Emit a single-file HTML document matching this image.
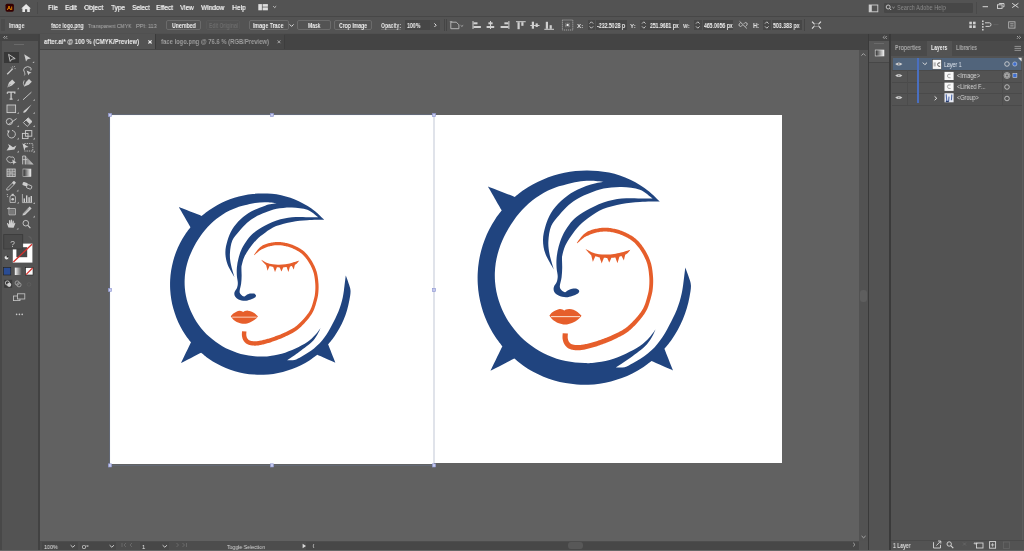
<!DOCTYPE html>
<html><head><meta charset="utf-8">
<style>
*{margin:0;padding:0;box-sizing:border-box}
html,body{width:1024px;height:551px;overflow:hidden;background:#535353;font-family:"Liberation Sans",sans-serif}
.a{position:absolute}
.t{position:absolute;white-space:pre;transform-origin:0 0;font-family:"Liberation Sans",sans-serif;will-change:transform;-webkit-font-smoothing:antialiased}
svg{overflow:visible}
</style></head><body>
<div style="position:absolute;left:0;top:0;width:1024px;height:551px;filter:blur(0.3px)">
<div class="a" style="left:0px;top:0px;width:1024px;height:16px;background:#535353;"></div>
<div class="a" style="left:0px;top:16px;width:1024px;height:1px;background:#474747;"></div>
<div class="a" style="left:0px;top:17px;width:1024px;height:16px;background:#535353;"></div>
<div class="a" style="left:0px;top:33px;width:1024px;height:1px;background:#505050;"></div>
<div class="a" style="left:40px;top:34px;width:819px;height:16px;background:#444444;"></div>
<div class="a" style="left:40px;top:34px;width:115px;height:15px;background:#535353;"></div>
<div class="a" style="left:156px;top:34px;width:127.5px;height:15px;background:#474747;"></div>
<div class="a" style="left:155px;top:34px;width:1px;height:15px;background:#3a3a3a;"></div>
<div class="a" style="left:283.5px;top:35px;width:0.8px;height:14px;background:#3e3e3e;"></div>
<div class="a" style="left:0px;top:34px;width:38px;height:7px;background:#444444;"></div>
<div class="a" style="left:0px;top:41px;width:38px;height:510px;background:#535353;"></div>
<div class="a" style="left:0px;top:41px;width:1.5px;height:510px;background:#484848;"></div>
<div class="a" style="left:38px;top:34px;width:2px;height:517px;background:#424242;"></div>
<div class="a" style="left:40px;top:50px;width:819px;height:491px;background:#616161;"></div>
<div class="a" style="left:859px;top:34px;width:9px;height:16px;background:#444444;"></div>
<div class="a" style="left:859px;top:50px;width:9px;height:491px;background:#525252;"></div>
<div class="a" style="left:860px;top:289.5px;width:7px;height:12.4px;background:#5e5e5e;border-radius:3px"></div>
<svg class="a" style="left:859px;top:50px" width="9" height="9"><path d="M2.4,5.6 L4.4,3.6 L6.4,5.6" stroke="#bcbcbc" stroke-width="0.8" fill="none"/></svg>
<div class="a" style="left:868px;top:34px;width:1px;height:517px;background:#3a3a3a;"></div>
<div class="a" style="left:869px;top:34px;width:20px;height:517px;background:#535353;"></div>
<div class="a" style="left:869px;top:34px;width:20px;height:7px;background:#444444;"></div>
<div class="a" style="left:889px;top:34px;width:2px;height:517px;background:#3a3a3a;"></div>
<div class="a" style="left:891px;top:34px;width:133px;height:517px;background:#535353;"></div>
<div class="a" style="left:891px;top:34px;width:133px;height:7px;background:#444444;"></div>
<div class="a" style="left:40px;top:541px;width:819px;height:9px;background:#4d4d4d;"></div>
<div class="a" style="left:0px;top:550px;width:1024px;height:1px;background:#676767;"></div>
<div class="a" style="left:110px;top:115px;width:324px;height:349px;background:#ffffff;"></div>
<div class="a" style="left:434px;top:115px;width:348px;height:348px;background:#ffffff;"></div>
<svg class="a" style="left:0;top:0" width="40" height="16">
<rect x="5.5" y="3.7" width="8.4" height="8" rx="1.6" fill="#330000"/>
<text x="9.7" y="10.3" font-family="Liberation Sans" font-weight="700" font-size="5.6" fill="#ff9a00" text-anchor="middle">Ai</text>
<path d="M21.3,8.4 L26.1,3.9 L30.9,8.4 L29.8,8.4 L29.8,11.9 L27.2,11.9 L27.2,9.2 L25,9.2 L25,11.9 L22.4,11.9 L22.4,8.4Z" fill="#e6e6e6"/>
<rect x="37" y="2" width="1" height="12" fill="#4a4a4a"/>
</svg>
<svg class="a" style="left:250px;top:0" width="40" height="16">
<rect x="8.3" y="4.1" width="3.6" height="6.2" fill="#dedede"/><rect x="12.6" y="4.1" width="5.3" height="2.6" fill="#dedede"/><rect x="12.6" y="7.4" width="5.3" height="2.9" fill="#dedede"/>
<path d="M23.2,6.2 L24.7,7.6 L26.2,6.2" stroke="#d0d0d0" stroke-width="0.9" fill="none"/>
</svg>
<div class="a" style="left:884px;top:3px;width:89px;height:10px;background:#474747;border-radius:1px"></div>
<svg class="a" style="left:860px;top:0" width="164" height="16">
<rect x="9.2" y="5" width="8.6" height="6.8" fill="none" stroke="#cfcfcf" stroke-width="0.9"/><rect x="9.2" y="5" width="2.6" height="6.8" fill="#cfcfcf"/>
<circle cx="28.2" cy="7" r="2" fill="none" stroke="#cfcfcf" stroke-width="0.9"/><path d="M29.6,8.4 L31.2,10" stroke="#cfcfcf" stroke-width="1"/>
<path d="M32.4,7 L33.5,8 L34.6,7" stroke="#cfcfcf" stroke-width="0.7" fill="none"/>
<rect x="116" y="2" width="1" height="12" fill="#4a4a4a"/>
<rect x="122.6" y="6.2" width="5.4" height="1" fill="#d8d8d8"/>
<rect x="137.5" y="4.8" width="4.6" height="3.6" fill="none" stroke="#d8d8d8" stroke-width="0.9"/><path d="M139.3,4.2 L139.3,3.5 L144,3.5 L144,6.8 L143,6.8" stroke="#d8d8d8" stroke-width="0.9" fill="none"/>
<path d="M152.2,3.3 L158.4,7.6 M158.4,3.3 L152.2,7.6" stroke="#d8d8d8" stroke-width="1"/>
</svg>
<svg class="a" style="left:0;top:17px" width="6" height="16"><rect x="1.5" y="2" width="1" height="12" fill="#474747"/><rect x="3.5" y="2" width="1" height="12" fill="#474747"/></svg>
<div class="a" style="left:51px;top:29.2px;width:32px;height:0.6px;background:#808080;"></div>
<div class="a" style="left:166px;top:20px;width:35px;height:10px;background:#535353;border:1px solid #6b6b6b;border-radius:2px"></div>
<div class="a" style="left:205.5px;top:20px;width:34px;height:10px;background:#535353;border:1px solid #585858;border-radius:2px"></div>
<div class="a" style="left:249px;top:20px;width:40px;height:10px;background:#535353;border:1px solid #6b6b6b;border-radius:2px"></div>
<svg class="a" style="left:288px;top:17px" width="8" height="16"><path d="M1.6,7.4 L3.6,9.4 L5.6,7.4" stroke="#dcdcdc" stroke-width="1" fill="none"/></svg>
<div class="a" style="left:297px;top:20px;width:34px;height:10px;background:#535353;border:1px solid #6b6b6b;border-radius:2px"></div>
<div class="a" style="left:334px;top:20px;width:38px;height:10px;background:#535353;border:1px solid #6b6b6b;border-radius:2px"></div>
<svg class="a" style="left:381px;top:29px" width="21" height="2"><line x1="0.5" y1="0.5" x2="20" y2="0.5" stroke="#9a9a9a" stroke-width="0.7" stroke-dasharray="1,1"/></svg>
<div class="a" style="left:405px;top:20px;width:25px;height:10px;background:#464646;"></div>
<div class="a" style="left:430px;top:20px;width:10px;height:10px;background:#4b4b4b;"></div>
<svg class="a" style="left:430px;top:17px" width="10" height="16"><path d="M4.4,6.4 L6.2,8.2 L4.4,10" stroke="#e0e0e0" stroke-width="1" fill="none"/></svg>
<div class="a" style="left:444px;top:19px;width:1px;height:12px;background:#454545;"></div>
<div class="a" style="left:446px;top:19px;width:1px;height:12px;background:#454545;"></div>
<svg class="a" style="left:440px;top:17px" width="125" height="16">
<path d="M10.8,5.2 L16.3,5.2 L18.9,7.8 L18.9,11.7 L10.8,11.7Z" fill="none" stroke="#bdbdbd" stroke-width="0.9"/><path d="M9.8,4.7 L12.3,4.7" stroke="#bdbdbd" stroke-width="0.8"/>
<path d="M20.6,8.3 L21.9,9.4 L23.2,8.3" stroke="#bdbdbd" stroke-width="0.8" fill="none"/>
<rect x="32.5" y="4" width="1" height="8" fill="#d0d0d0"/><rect x="33.5" y="5.3" width="4" height="2" fill="#d0d0d0"/><rect x="33.5" y="9" width="7.4" height="2" fill="#d0d0d0"/>
<rect x="50" y="4" width="1" height="8" fill="#d0d0d0"/><rect x="48.4" y="5.3" width="4.2" height="2" fill="#d0d0d0"/><rect x="46.6" y="9" width="7.6" height="2" fill="#d0d0d0"/>
<rect x="68.4" y="4" width="1" height="8" fill="#d0d0d0"/><rect x="64.4" y="5.3" width="4" height="2" fill="#d0d0d0"/><rect x="60.6" y="9" width="7.8" height="2" fill="#d0d0d0"/>
<rect x="76" y="4.2" width="9.7" height="1" fill="#d0d0d0"/><rect x="77.5" y="5.2" width="2.2" height="7" fill="#d0d0d0"/><rect x="81.3" y="5.2" width="2.2" height="3.6" fill="#d0d0d0"/>
<rect x="90.3" y="8" width="9.2" height="1" fill="#d0d0d0"/><rect x="91.8" y="4.7" width="2.2" height="7" fill="#d0d0d0"/><rect x="95.6" y="6.4" width="2.2" height="3.6" fill="#d0d0d0"/>
<rect x="104.3" y="11.8" width="9.7" height="1" fill="#d0d0d0"/><rect x="105.8" y="4.8" width="2.2" height="7" fill="#d0d0d0"/><rect x="109.6" y="8.2" width="2.2" height="3.6" fill="#d0d0d0"/>
</svg>
<svg class="a" style="left:560px;top:17px" width="80" height="16">
<rect x="2.4" y="3" width="10.4" height="10" fill="none" stroke="#b5b5b5" stroke-width="0.8" stroke-dasharray="1.2,0.8"/>
<rect x="5.6" y="6.2" width="4" height="3.6" fill="none" stroke="#b5b5b5" stroke-width="0.6" stroke-dasharray="0.8,0.6"/>
<rect x="6.6" y="7" width="2" height="2" fill="#f0f0f0"/>
</svg>
<div class="a" style="left:588px;top:20px;width:7px;height:10px;background:#474747;"></div>
<svg class="a" style="left:588px;top:17px" width="8" height="16"><path d="M1.6,6.6 L3.4,4.8 L5.2,6.6 M1.6,9.4 L3.4,11.2 L5.2,9.4" stroke="#d0d0d0" stroke-width="0.9" fill="none"/></svg>
<div class="a" style="left:595.7px;top:20.4px;width:31.2px;height:9.2px;background:#464646;"></div>
<div class="a" style="left:640px;top:20px;width:8px;height:10px;background:#474747;"></div>
<svg class="a" style="left:640px;top:17px" width="8" height="16"><path d="M2,6.6 L3.8,4.8 L5.6,6.6 M2,9.4 L3.8,11.2 L5.6,9.4" stroke="#d0d0d0" stroke-width="0.9" fill="none"/></svg>
<div class="a" style="left:648.4px;top:20.4px;width:30.4px;height:9.2px;background:#464646;"></div>
<div class="a" style="left:694px;top:20px;width:8px;height:10px;background:#474747;"></div>
<svg class="a" style="left:694px;top:17px" width="8" height="16"><path d="M2,6.6 L3.8,4.8 L5.6,6.6 M2,9.4 L3.8,11.2 L5.6,9.4" stroke="#d0d0d0" stroke-width="0.9" fill="none"/></svg>
<div class="a" style="left:703px;top:20.4px;width:30px;height:9.2px;background:#464646;"></div>
<svg class="a" style="left:736px;top:17px" width="14" height="16"><path d="M4.6,5.6 L3.4,6.8 Q2.4,8 3.4,9 Q4.4,10 5.6,9 L6.4,8.2 M7.8,6.8 L8.6,6 Q9.8,5 10.8,6 Q11.8,7 10.8,8.2 L9.6,9.4 M3.6,4.4 L10.8,11.4" stroke="#c8c8c8" stroke-width="0.9" fill="none"/></svg>
<div class="a" style="left:763px;top:20px;width:8px;height:10px;background:#474747;"></div>
<svg class="a" style="left:763px;top:17px" width="8" height="16"><path d="M2,6.6 L3.8,4.8 L5.6,6.6 M2,9.4 L3.8,11.2 L5.6,9.4" stroke="#d0d0d0" stroke-width="0.9" fill="none"/></svg>
<div class="a" style="left:771.5px;top:20.4px;width:30.3px;height:9.2px;background:#464646;"></div>
<div class="a" style="left:804px;top:19px;width:1px;height:12px;background:#454545;"></div>
<svg class="a" style="left:808px;top:17px" width="16" height="16"><path d="M4,4.6 L6.4,7 M13,4.6 L10.6,7 M4,11.6 L6.4,9.2 M13,11.6 L10.6,9.2" stroke="#e0e0e0" stroke-width="1.1"/><rect x="6.4" y="6.8" width="4.2" height="2.6" fill="none" stroke="#9a9a9a" stroke-width="0.6"/></svg>
<svg class="a" style="left:960px;top:17px" width="64" height="16">
<rect x="9.3" y="4.7" width="2.6" height="2.6" fill="#cfcfcf"/><rect x="13" y="4.7" width="2.6" height="2.6" fill="#cfcfcf"/><rect x="9.3" y="8.4" width="2.6" height="2.6" fill="#cfcfcf"/><rect x="13" y="8.4" width="2.6" height="2.6" fill="#cfcfcf"/>
<rect x="22" y="3.5" width="1.6" height="1.6" fill="#cfcfcf"/><rect x="22" y="6.3" width="1.6" height="1.6" fill="#cfcfcf"/><rect x="22" y="9.1" width="1.6" height="1.6" fill="#cfcfcf"/><rect x="22" y="11.9" width="1.6" height="1.6" fill="#cfcfcf"/>
<path d="M25,5.8 L29.4,5.8 Q31,5.8 31,7.6 Q31,9.4 29.4,9.4 L25.5,9.4" stroke="#cfcfcf" stroke-width="1" fill="none"/>
<rect x="33.5" y="7.3" width="5" height="0.8" fill="#666"/>
<rect x="48.7" y="4.8" width="6.3" height="6.3" fill="none" stroke="#bdbdbd" stroke-width="0.8"/><path d="M50.2,6.8 L53.6,6.8 M50.2,8.9 L53.6,8.9" stroke="#bdbdbd" stroke-width="0.8"/>
</svg>
<svg class="a" style="left:0;top:34px" width="12" height="7"><path d="M5,2 L3.6,3.4 L5,4.8 M7.2,2 L5.8,3.4 L7.2,4.8" stroke="#bcbcbc" stroke-width="0.8" fill="none"/></svg>
<svg class="a" style="left:145px;top:36px" width="10" height="12"><path d="M3.4,4.3 L6.6,7.5 M6.6,4.3 L3.4,7.5" stroke="#e8e8e8" stroke-width="1.1"/></svg>
<svg class="a" style="left:274px;top:36px" width="10" height="12"><path d="M3.6,4.4 L6.4,7.2 M6.4,4.4 L3.6,7.2" stroke="#a8a8a8" stroke-width="1"/></svg>
<svg class="a" style="left:869px;top:34px" width="155" height="7"><path d="M15.5,2 L14.1,3.4 L15.5,4.8 M17.7,2 L16.3,3.4 L17.7,4.8" stroke="#bcbcbc" stroke-width="0.8" fill="none"/><path d="M148,2 L149.4,3.4 L148,4.8 M150.2,2 L151.6,3.4 L150.2,4.8" stroke="#bcbcbc" stroke-width="0.8" fill="none"/></svg>
<div class="a" style="left:869px;top:41px;width:20px;height:22px;background:#585858;border-bottom:1px solid #474747"></div>
<svg class="a" style="left:869px;top:41px" width="20" height="22"><rect x="5" y="2" width="10" height="1" fill="#6a6a6a"/>
<defs><linearGradient id="gg" x1="0" x2="1"><stop offset="0" stop-color="#2a2a2a"/><stop offset="1" stop-color="#f2f2f2"/></linearGradient></defs>
<rect x="6.2" y="9" width="8.8" height="6" fill="url(#gg)" stroke="#e8e8e8" stroke-width="0.6"/></svg>
<div class="a" style="left:891px;top:41px;width:133px;height:15px;background:#4a4a4a;"></div>
<div class="a" style="left:927px;top:41px;width:24.5px;height:15px;background:#535353;"></div>
<svg class="a" style="left:1012px;top:41px" width="12" height="15"><path d="M2.5,5.4 L9,5.4 M2.5,7.4 L9,7.4 M2.5,9.4 L9,9.4" stroke="#9a9a9a" stroke-width="0.9"/></svg>
<div class="a" style="left:891px;top:56px;width:133px;height:484px;background:#535353;"></div>
<div class="a" style="left:1021.5px;top:56px;width:0.8px;height:484px;background:#5c5c5c;"></div>
<div class="a" style="left:893px;top:57.5px;width:128px;height:12.5px;background:#51647b;"></div>
<div class="a" style="left:892px;top:70px;width:130px;height:1px;background:#4a4a4a;"></div>
<div class="a" style="left:892px;top:81.5px;width:130px;height:1px;background:#4a4a4a;"></div>
<div class="a" style="left:892px;top:93px;width:130px;height:1px;background:#4a4a4a;"></div>
<div class="a" style="left:892px;top:104.5px;width:130px;height:1px;background:#4a4a4a;"></div>
<div class="a" style="left:907px;top:70px;width:1px;height:34.5px;background:#4c4c4c;"></div>
<div class="a" style="left:1002px;top:70px;width:1px;height:34.5px;background:#4c4c4c;"></div>
<div class="a" style="left:916.6px;top:58px;width:2px;height:45px;background:#4a6fc0;"></div>
<svg class="a" style="left:0;top:0" width="1024" height="120">
<path d="M895.1999999999999,64 Q898.8,60.8 902.4,64 Q898.8,67.2 895.1999999999999,64Z" fill="#d0d0d0"/><circle cx="898.8" cy="64" r="0.9" fill="#8a8a8a"/><path d="M895.1999999999999,75.5 Q898.8,72.3 902.4,75.5 Q898.8,78.7 895.1999999999999,75.5Z" fill="#d0d0d0"/><circle cx="898.8" cy="75.5" r="0.9" fill="#8a8a8a"/><path d="M895.1999999999999,97.5 Q898.8,94.3 902.4,97.5 Q898.8,100.7 895.1999999999999,97.5Z" fill="#d0d0d0"/><circle cx="898.8" cy="97.5" r="0.9" fill="#8a8a8a"/>
<path d="M922.8,62.6 L924.9,64.7 L927,62.6" stroke="#e0e0e0" stroke-width="1" fill="none"/>
<rect x="932.3" y="59.6" width="9.1" height="9.6" fill="#f6f6f6" stroke="#3a3a3a" stroke-width="0.5"/><rect x="933.6" y="62.4" width="2.2" height="4" fill="#b8b8b8"/><path d="M940.2,62.8 Q937.4,62.4 937.6,64.6 Q937.8,66.8 940.2,66.4" stroke="#444" stroke-width="0.9" fill="none"/>
<rect x="944.5" y="71.9" width="9.1" height="8.1" fill="#f8f8f8"/><path d="M950.6,74.2 Q947.2,73.6 947.4,76 Q947.6,78.4 950.6,77.8" stroke="#8a8a8a" stroke-width="0.8" fill="none"/>
<rect x="944.5" y="82.6" width="9.1" height="8.3" fill="#f8f8f8"/><path d="M950.6,84.9 Q947.2,84.3 947.4,86.7 Q947.6,89.1 950.6,88.5" stroke="#8a8a8a" stroke-width="0.8" fill="none"/>
<path d="M934.6,96.4 L936.8,98.3 L934.6,100.2" stroke="#e0e0e0" stroke-width="1" fill="none"/>
<rect x="944.5" y="93.2" width="9.1" height="9.1" fill="#e8eaf2"/><path d="M946.2,94.4 L946.8,101 M949,96.6 L948.6,101.4 M951.8,94.6 L951.4,100.2" stroke="#4f6aa8" stroke-width="1.1" fill="none"/><rect x="945.8" y="100.8" width="3" height="1.4" fill="#263a6a"/>
<circle cx="1007" cy="64" r="2.3" fill="none" stroke="#dcdcdc" stroke-width="0.8"/>
<circle cx="1014.8" cy="64" r="2.1" fill="#3f6fd0" stroke="#e8e8e8" stroke-width="0.5"/>
<path d="M1018,57.8 L1021.6,57.8 L1021.6,61.4Z" fill="#e0e0e0"/>
<circle cx="1007" cy="75.5" r="3" fill="#6a6a6a" stroke="#bdbdbd" stroke-width="0.7"/><circle cx="1007" cy="75.5" r="1.7" fill="none" stroke="#e0e0e0" stroke-width="0.7"/>
<rect x="1012.9" y="73.5" width="4" height="4" fill="#3f6fd0" stroke="#e8e8e8" stroke-width="0.5"/>
<circle cx="1007" cy="87" r="2.3" fill="none" stroke="#d0d0d0" stroke-width="0.8"/>
<circle cx="1007" cy="98.5" r="2.3" fill="none" stroke="#d0d0d0" stroke-width="0.8"/>
</svg>
<div class="a" style="left:891px;top:540px;width:133px;height:10px;background:#535353;border-top:1px solid #4a4a4a"></div>
<svg class="a" style="left:920px;top:538px" width="104" height="12">
<path d="M13.5,4.2 L13.5,10 L20.5,10 L20.5,6.8 M16.4,7.6 L20.6,3.2 M18,3 L20.8,3 L20.8,5.6" stroke="#d6d6d6" stroke-width="0.9" fill="none"/>
<circle cx="29.2" cy="6" r="2.2" fill="none" stroke="#d6d6d6" stroke-width="0.9"/><path d="M30.8,7.6 L33.3,10.2" stroke="#d6d6d6" stroke-width="1.1"/>
<path d="M43,4.5 L46,7.5 M46,4.5 L43,7.5" stroke="#6a6a6a" stroke-width="0.8"/>
<rect x="56.5" y="5" width="6.5" height="5" fill="none" stroke="#d6d6d6" stroke-width="0.9"/><path d="M54.3,5.4 L57.5,5.4 M55.2,4.2 L54.2,5.4 L55.2,6.6" stroke="#d6d6d6" stroke-width="0.8" fill="none"/>
<rect x="69.6" y="3.6" width="6" height="6.6" fill="none" stroke="#d6d6d6" stroke-width="0.9"/><path d="M72.6,5.2 L72.6,8.6 M70.9,6.9 L74.3,6.9" stroke="#d6d6d6" stroke-width="0.8"/>
<rect x="83.4" y="4" width="6" height="6.4" fill="none" stroke="#666" stroke-width="0.8"/>
</svg>
<div class="a" style="left:42px;top:541.8px;width:36px;height:8px;background:#474747;"></div>
<svg class="a" style="left:68px;top:540px" width="12" height="10"><path d="M2.6,5.2 L4.8,7.2 L7,5.2" stroke="#d8d8d8" stroke-width="0.9" fill="none"/></svg>
<div class="a" style="left:80px;top:541.8px;width:36px;height:8px;background:#474747;"></div>
<svg class="a" style="left:107px;top:540px" width="12" height="10"><path d="M2.6,5.2 L4.8,7.2 L7,5.2" stroke="#d8d8d8" stroke-width="0.9" fill="none"/></svg>
<svg class="a" style="left:118px;top:540px" width="22" height="10"><path d="M4,3 L4,7 M8,3 L6,5 L8,7 M14,3 L12,5 L14,7" stroke="#707070" stroke-width="0.8" fill="none"/></svg>
<div class="a" style="left:140px;top:541.8px;width:29px;height:8px;background:#474747;"></div>
<svg class="a" style="left:160px;top:540px" width="12" height="10"><path d="M2.6,5.2 L4.8,7.2 L7,5.2" stroke="#d8d8d8" stroke-width="0.9" fill="none"/></svg>
<svg class="a" style="left:172px;top:540px" width="20" height="10"><path d="M4.5,3 L6.5,5 L4.5,7 M10.5,3 L12.5,5 L10.5,7 M14.5,3 L14.5,7" stroke="#707070" stroke-width="0.8" fill="none"/></svg>
<div class="a" style="left:306px;top:541.5px;width:553px;height:8.5px;background:#474747;"></div>
<svg class="a" style="left:300px;top:541px" width="20" height="10"><path d="M2.6,2.8 L6,5 L2.6,7.2Z" fill="#dcdcdc"/><path d="M13.8,3 Q12.6,5 13.8,7" stroke="#bcbcbc" stroke-width="0.8" fill="none"/></svg>
<div class="a" style="left:568px;top:542px;width:15px;height:7px;background:#585858;border-radius:3px"></div>
<svg class="a" style="left:850px;top:536px" width="18" height="14"><path d="M3.2,6.8 L5,8.6 L3.2,10.4" stroke="#bcbcbc" stroke-width="0.8" fill="none"/><path d="M11.6,0 L13.6,1.8 L15.6,0" stroke="#bcbcbc" stroke-width="0.8" fill="none"/></svg>
<div class="a" style="left:14px;top:43.5px;width:10px;height:1px;background:#6a6a6a;"></div>
<div class="a" style="left:4px;top:51.8px;width:14.5px;height:11.4px;background:#383838;"></div>
<svg class="a" style="left:0;top:0" width="1024" height="551" viewBox="0 0 1024 551">
<g id="logo">
<path d="M659.80,201.60 C658.07,199.97 652.67,194.54 649.41,191.82 C646.14,189.11 643.40,187.29 640.23,185.30 C637.05,183.30 633.74,181.46 630.35,179.85 C626.96,178.23 623.45,176.80 619.89,175.59 C616.33,174.39 612.68,173.39 609.01,172.61 C605.34,171.83 601.60,171.26 597.88,170.89 C594.15,170.52 590.39,170.36 586.65,170.38 C582.92,170.40 579.17,170.62 575.47,171.02 C571.77,171.41 568.07,172.00 564.43,172.75 C560.79,173.50 557.18,174.44 553.63,175.55 C550.09,176.65 546.59,177.93 543.18,179.39 C539.77,180.84 536.41,182.46 533.16,184.25 C529.92,186.04 526.75,188.00 523.70,190.11 C520.66,192.22 516.36,195.77 514.89,196.91 C510.40,195.16 492.42,188.19 487.93,186.45 C490.23,190.43 499.45,206.37 501.75,210.35 C500.64,211.88 497.12,216.34 495.05,219.50 C492.98,222.65 491.07,225.94 489.35,229.30 C487.63,232.66 486.08,236.12 484.72,239.65 C483.37,243.17 482.19,246.78 481.22,250.43 C480.25,254.07 479.46,257.79 478.88,261.52 C478.30,265.25 477.91,269.03 477.73,272.80 C477.54,276.57 477.56,280.37 477.78,284.13 C477.99,287.90 478.41,291.68 479.03,295.40 C479.64,299.12 480.46,302.84 481.47,306.47 C482.47,310.11 483.68,313.71 485.06,317.22 C486.45,320.73 488.03,324.19 489.78,327.53 C491.53,330.87 493.47,334.14 495.56,337.28 C497.66,340.42 501.22,344.85 502.35,346.36 C500.39,350.44 492.54,366.77 490.57,370.85 C494.53,368.81 510.37,360.64 514.33,358.60 C515.84,359.78 520.25,363.47 523.38,365.65 C526.51,367.83 529.78,369.85 533.12,371.69 C536.47,373.52 539.94,375.18 543.46,376.64 C546.99,378.11 550.61,379.39 554.27,380.46 C557.93,381.54 561.68,382.42 565.43,383.10 C569.19,383.78 573.00,384.26 576.81,384.53 C580.61,384.80 584.46,384.87 588.27,384.73 C592.08,384.59 595.91,384.25 599.69,383.70 C603.47,383.15 607.24,382.40 610.93,381.45 C614.63,380.50 618.30,379.35 621.87,378.01 C625.44,376.67 628.96,375.13 632.37,373.42 C635.78,371.70 639.12,369.80 642.33,367.73 C645.53,365.66 650.06,362.12 651.61,361.00 C655.18,362.56 669.43,368.82 672.99,370.39 C671.56,366.78 665.82,352.37 664.39,348.77 C665.59,347.25 669.38,342.80 671.62,339.64 C673.85,336.47 675.93,333.17 677.81,329.78 C679.69,326.39 681.39,322.87 682.89,319.30 C684.39,315.73 685.70,312.05 686.80,308.33 C687.90,304.62 688.81,300.82 689.50,297.00 C690.19,293.19 691.09,288.87 690.94,285.45 C690.79,282.03 689.54,279.49 688.60,276.50 C687.66,273.51 685.85,269.00 685.30,267.50 C684.94,270.38 683.75,280.49 683.16,284.80 C682.56,289.11 682.33,290.52 681.73,293.35 C681.13,296.17 680.40,298.97 679.56,301.73 C678.72,304.49 677.75,307.22 676.67,309.90 C675.59,312.57 674.33,315.18 673.08,317.78 C671.82,320.38 670.48,322.94 669.12,325.52 C667.76,328.09 666.44,330.72 664.93,333.23 C663.41,335.75 661.78,338.22 660.03,340.62 C658.28,343.01 656.49,345.45 654.45,347.60 C652.40,349.76 650.09,351.69 647.77,353.55 C645.44,355.41 642.98,357.12 640.48,358.75 C637.98,360.37 635.40,361.89 632.77,363.29 C630.14,364.69 627.49,366.45 624.69,367.14 C621.88,367.84 617.40,367.40 615.94,367.45 C618.04,366.04 623.78,362.41 628.55,358.95 C633.31,355.49 640.66,350.27 644.51,346.68 C648.36,343.10 649.82,340.31 651.64,337.44 C653.47,334.57 654.83,330.80 655.46,329.47 C654.45,330.81 651.96,334.70 649.37,337.47 C646.78,340.24 643.82,343.39 639.91,346.09 C635.99,348.80 630.92,351.39 625.87,353.69 C620.82,355.99 614.90,358.38 609.60,359.89 C604.30,361.39 598.23,362.17 594.06,362.70 C589.89,363.24 587.75,363.12 584.60,363.10 C581.45,363.08 578.28,362.93 575.15,362.60 C572.02,362.28 568.89,361.78 565.80,361.12 C562.72,360.47 559.66,359.65 556.66,358.68 C553.67,357.70 550.71,356.57 547.83,355.28 C544.95,354.00 542.13,352.56 539.40,350.99 C536.67,349.41 534.01,347.69 531.46,345.83 C528.92,343.98 526.45,341.99 524.11,339.88 C521.77,337.77 519.53,335.53 517.42,333.19 C515.31,330.85 513.32,328.38 511.47,325.83 C509.62,323.28 507.90,320.62 506.33,317.89 C504.76,315.16 503.32,312.33 502.06,309.45 C500.79,306.57 499.67,303.60 498.72,300.60 C497.77,297.60 496.98,294.54 496.37,291.45 C495.77,288.37 495.33,285.24 495.07,282.11 C494.82,278.98 494.75,275.83 494.85,272.70 C494.95,269.57 495.25,266.44 495.70,263.36 C496.16,260.27 496.80,257.21 497.58,254.20 C498.37,251.20 499.33,248.24 500.40,245.34 C501.48,242.45 502.71,239.61 504.04,236.83 C505.37,234.06 506.82,231.34 508.38,228.69 C509.93,226.05 511.60,223.46 513.37,220.95 C515.14,218.43 517.01,215.98 518.99,213.62 C520.97,211.27 523.06,208.98 525.27,206.81 C527.48,204.64 529.80,202.55 532.23,200.61 C534.65,198.67 537.20,196.84 539.84,195.18 C542.48,193.51 545.23,191.98 548.05,190.62 C550.87,189.26 553.80,188.05 556.76,187.02 C559.73,185.99 562.30,185.32 565.84,184.43 C569.38,183.55 573.97,182.32 578.00,181.70 C582.03,181.08 585.73,180.68 590.00,180.70 C594.27,180.72 601.33,181.62 603.60,181.80 C601.33,182.30 594.93,183.18 590.00,184.80 C585.07,186.42 578.83,188.80 574.00,191.50 C569.17,194.20 564.83,197.42 561.00,201.00 C557.17,204.58 553.58,208.83 551.00,213.00 C548.42,217.17 546.83,221.50 545.50,226.00 C544.17,230.50 543.00,235.33 543.00,240.00 C543.00,244.67 543.70,249.10 545.50,254.00 C547.30,258.90 552.42,266.83 553.80,269.40 C553.08,266.83 550.40,258.73 549.50,254.00 C548.60,249.27 548.12,245.67 548.40,241.00 C548.68,236.33 549.38,230.33 551.20,226.00 C553.02,221.67 556.38,218.50 559.30,215.00 C562.22,211.50 565.58,207.77 568.70,205.00 C571.82,202.23 574.45,200.40 578.00,198.40 C581.55,196.40 585.73,194.63 590.00,193.00 C594.27,191.37 598.32,189.60 603.60,188.60 C608.88,187.60 615.65,186.80 621.70,187.00 C627.75,187.20 634.75,187.87 639.90,189.80 C645.05,191.73 650.48,197.13 652.60,198.60 C651.23,198.60 648.78,198.65 644.40,198.60 C640.02,198.55 632.35,197.90 626.30,198.30 C620.25,198.70 614.15,199.32 608.10,201.00 C602.05,202.68 595.18,205.80 590.00,208.40 C584.82,211.00 580.50,213.83 577.00,216.60 C573.50,219.37 571.43,221.78 569.00,225.00 C566.57,228.22 564.13,232.27 562.40,235.90 C560.67,239.53 559.57,243.12 558.60,246.80 C557.63,250.48 556.93,254.47 556.60,258.00 C556.27,261.53 556.42,265.00 556.60,268.00 C556.78,271.00 557.67,273.70 557.70,276.00 C557.73,278.30 557.45,279.93 556.80,281.80 C556.15,283.67 554.22,285.50 553.80,287.20 C553.38,288.90 553.50,290.60 554.30,292.00 C555.10,293.40 556.67,294.72 558.60,295.60 C560.53,296.48 563.63,297.23 565.90,297.30 C568.17,297.37 570.27,296.58 572.20,296.00 C574.13,295.42 576.33,294.63 577.50,293.80 C578.67,292.97 579.32,291.83 579.20,291.00 C579.08,290.17 577.97,289.17 576.80,288.80 C575.63,288.43 573.72,288.50 572.20,288.80 C570.68,289.10 568.90,290.03 567.70,290.60 C566.50,291.17 566.02,292.27 565.00,292.20 C563.98,292.13 562.47,291.17 561.60,290.20 C560.73,289.23 559.80,288.57 559.80,286.40 C559.80,284.23 561.20,280.27 561.60,277.20 C562.00,274.13 562.13,271.03 562.20,268.00 C562.27,264.97 561.97,261.17 562.00,259.00 C562.03,256.83 561.87,257.22 562.40,255.00 C562.93,252.78 563.75,248.88 565.20,245.70 C566.65,242.52 568.65,239.35 571.10,235.90 C573.55,232.45 576.75,228.18 579.90,225.00 C583.05,221.82 586.15,219.47 590.00,216.80 C593.85,214.13 597.72,211.13 603.00,209.00 C608.28,206.87 615.55,205.17 621.70,204.00 C627.85,202.83 633.55,202.40 639.90,202.00 C646.25,201.60 656.48,201.67 659.80,201.60Z" fill="#20447f"/>
<path d="M577.22,243.31 L577.62,242.97 L578.13,242.52 L578.72,242.00 L579.38,241.41 L580.10,240.78 L580.86,240.12 L581.64,239.46 L582.45,238.81 L583.25,238.18 L584.03,237.61 L584.78,237.12 L585.48,236.70 L586.16,236.34 L586.85,236.00 L587.53,235.69 L588.21,235.41 L588.88,235.13 L589.54,234.81 L590.21,234.52 L590.90,234.24 L591.61,233.97 L592.35,233.71 L593.12,233.47 L593.92,233.23 L594.76,232.99 L595.63,232.77 L596.54,232.56 L597.46,232.36 L598.41,232.17 L599.37,232.01 L600.33,231.86 L601.30,231.74 L602.27,231.64 L603.23,231.56 L604.17,231.52 L605.10,231.50 L606.02,231.52 L606.96,231.56 L607.91,231.64 L608.86,231.74 L609.82,231.86 L610.78,232.01 L611.74,232.17 L612.70,232.36 L613.64,232.56 L614.58,232.77 L615.50,233.00 L616.41,233.23 L617.29,233.48 L618.15,233.74 L619.01,234.02 L619.86,234.31 L620.70,234.63 L621.53,234.95 L622.36,235.29 L623.17,235.64 L623.97,236.01 L624.76,236.39 L625.54,236.78 L626.31,237.18 L627.08,237.59 L627.83,238.00 L628.56,238.42 L629.28,238.84 L629.98,239.28 L630.66,239.72 L631.34,240.19 L632.00,240.67 L632.66,241.17 L633.30,241.71 L633.94,242.27 L634.58,242.87 L635.22,243.50 L635.86,244.18 L636.50,244.89 L637.14,245.63 L637.77,246.40 L638.40,247.19 L639.01,248.00 L639.61,248.83 L640.20,249.68 L640.78,250.54 L641.33,251.40 L641.87,252.28 L642.40,253.17 L642.92,254.09 L643.43,255.02 L643.92,255.96 L644.41,256.92 L644.87,257.90 L645.32,258.88 L645.74,259.87 L646.14,260.86 L646.52,261.86 L646.86,262.85 L647.18,263.85 L647.47,264.85 L647.72,265.88 L647.96,266.94 L648.16,268.01 L648.35,269.10 L648.52,270.19 L648.67,271.29 L648.80,272.37 L648.92,273.45 L649.03,274.51 L649.12,275.55 L649.21,276.55 L649.28,277.52 L649.33,278.46 L649.37,279.39 L649.39,280.30 L649.39,281.20 L649.38,282.09 L649.36,282.97 L649.33,283.83 L649.29,284.67 L649.23,285.51 L649.17,286.33 L649.11,287.14 L649.04,287.90 L648.96,288.62 L648.88,289.30 L648.79,289.95 L648.70,290.58 L648.59,291.20 L648.47,291.83 L648.33,292.48 L648.17,293.16 L647.99,293.89 L647.79,294.66 L647.57,295.51 L647.32,296.43 L647.06,297.40 L646.78,298.41 L646.49,299.46 L646.19,300.53 L645.87,301.60 L645.52,302.68 L645.16,303.75 L644.77,304.80 L644.35,305.82 L643.92,306.80 L643.46,307.73 L642.98,308.64 L642.46,309.53 L641.92,310.42 L641.36,311.29 L640.78,312.15 L640.17,313.00 L639.53,313.85 L638.87,314.70 L638.18,315.56 L637.46,316.41 L636.72,317.28 L635.95,318.15 L635.16,319.03 L634.33,319.94 L633.47,320.85 L632.59,321.76 L631.69,322.67 L630.77,323.57 L629.83,324.45 L628.88,325.31 L627.92,326.15 L626.96,326.95 L625.98,327.72 L625.02,328.44 L624.03,329.11 L623.00,329.77 L621.94,330.40 L620.86,331.02 L619.75,331.61 L618.62,332.19 L617.49,332.75 L616.37,333.29 L615.25,333.82 L614.14,334.33 L613.06,334.83 L612.02,335.31 L611.02,335.77 L610.06,336.19 L609.12,336.59 L608.20,336.97 L607.29,337.34 L606.39,337.68 L605.50,338.02 L604.60,338.35 L603.71,338.67 L602.81,338.99 L601.90,339.31 L600.98,339.64 L600.07,339.96 L599.16,340.27 L598.26,340.58 L597.36,340.88 L596.46,341.17 L595.57,341.46 L594.68,341.74 L593.80,342.00 L592.91,342.26 L592.03,342.51 L591.15,342.75 L590.26,342.98 L589.36,343.21 L588.44,343.44 L587.52,343.66 L586.60,343.88 L585.68,344.08 L584.78,344.28 L583.88,344.45 L583.01,344.61 L582.16,344.75 L581.34,344.86 L580.56,344.95 L579.81,345.01 L579.07,345.05 L578.33,345.07 L577.60,345.07 L576.88,345.05 L576.17,345.01 L575.49,344.96 L574.82,344.88 L574.19,344.79 L573.60,344.69 L573.04,344.58 L572.54,344.45 L572.09,344.32 L571.72,344.19 L571.40,344.06 L571.11,343.91 L570.85,343.76 L570.61,343.59 L570.39,343.41 L570.17,343.22 L569.96,343.01 L569.75,342.78 L569.53,342.52 L569.31,342.25 L569.11,341.97 L568.94,341.74 L568.80,341.50 L568.66,341.24 L568.53,340.95 L568.40,340.65 L568.29,340.33 L568.18,339.99 L568.08,339.64 L567.99,339.28 L567.90,338.91 L567.83,338.54 L567.77,338.20 L567.73,337.90 L567.70,337.56 L567.69,337.17 L567.70,336.74 L567.71,336.30 L567.73,335.85 L567.76,335.40 L567.80,334.96 L567.83,334.55 L567.86,334.16 L567.88,333.80 L567.90,333.51 L562.70,333.29 L562.69,333.50 L562.67,333.78 L562.65,334.13 L562.61,334.56 L562.58,335.03 L562.54,335.54 L562.51,336.08 L562.50,336.65 L562.49,337.23 L562.51,337.82 L562.56,338.42 L562.63,339.00 L562.72,339.51 L562.82,339.99 L562.93,340.49 L563.06,340.99 L563.20,341.50 L563.36,342.01 L563.55,342.52 L563.76,343.04 L564.00,343.55 L564.27,344.06 L564.57,344.56 L564.89,345.03 L565.20,345.43 L565.51,345.82 L565.85,346.22 L566.21,346.61 L566.61,347.01 L567.05,347.40 L567.53,347.78 L568.04,348.13 L568.60,348.47 L569.20,348.77 L569.84,349.04 L570.51,349.28 L571.19,349.48 L571.90,349.65 L572.63,349.80 L573.39,349.93 L574.18,350.04 L574.99,350.13 L575.82,350.20 L576.67,350.25 L577.53,350.27 L578.41,350.27 L579.29,350.24 L580.19,350.19 L581.10,350.10 L582.03,349.98 L582.98,349.83 L583.93,349.66 L584.89,349.47 L585.85,349.26 L586.81,349.04 L587.77,348.81 L588.73,348.56 L589.68,348.32 L590.61,348.07 L591.54,347.82 L592.47,347.56 L593.40,347.29 L594.32,347.02 L595.25,346.73 L596.17,346.43 L597.09,346.13 L598.01,345.82 L598.93,345.50 L599.85,345.17 L600.77,344.84 L601.70,344.51 L602.62,344.16 L603.53,343.83 L604.44,343.49 L605.35,343.15 L606.26,342.80 L607.18,342.45 L608.11,342.08 L609.05,341.70 L610.00,341.30 L610.97,340.88 L611.95,340.44 L612.96,339.98 L613.98,339.49 L615.02,338.98 L616.10,338.47 L617.21,337.93 L618.35,337.37 L619.51,336.79 L620.68,336.19 L621.86,335.56 L623.03,334.90 L624.20,334.21 L625.36,333.50 L626.49,332.75 L627.58,331.96 L628.65,331.15 L629.70,330.29 L630.74,329.40 L631.75,328.49 L632.75,327.55 L633.73,326.60 L634.68,325.63 L635.61,324.66 L636.52,323.70 L637.39,322.73 L638.24,321.79 L639.05,320.85 L639.83,319.93 L640.59,319.02 L641.33,318.10 L642.05,317.18 L642.74,316.26 L643.41,315.33 L644.06,314.40 L644.68,313.45 L645.28,312.48 L645.86,311.50 L646.41,310.50 L646.94,309.47 L647.44,308.40 L647.91,307.29 L648.35,306.16 L648.75,305.01 L649.14,303.86 L649.50,302.72 L649.83,301.59 L650.15,300.49 L650.45,299.42 L650.73,298.39 L650.99,297.41 L651.23,296.49 L651.47,295.63 L651.68,294.81 L651.87,294.04 L652.04,293.30 L652.19,292.59 L652.32,291.89 L652.45,291.19 L652.55,290.49 L652.65,289.78 L652.74,289.04 L652.82,288.27 L652.89,287.46 L652.96,286.62 L653.02,285.76 L653.08,284.89 L653.12,283.99 L653.16,283.08 L653.18,282.16 L653.19,281.21 L653.19,280.25 L653.16,279.27 L653.13,278.28 L653.07,277.27 L652.99,276.25 L652.91,275.21 L652.81,274.15 L652.70,273.06 L652.58,271.94 L652.44,270.80 L652.28,269.65 L652.10,268.49 L651.90,267.32 L651.68,266.16 L651.42,265.01 L651.14,263.87 L650.82,262.75 L650.47,261.65 L650.09,260.56 L649.68,259.48 L649.25,258.41 L648.79,257.34 L648.32,256.29 L647.82,255.25 L647.31,254.23 L646.78,253.22 L646.24,252.23 L645.69,251.27 L645.13,250.32 L644.55,249.38 L643.96,248.45 L643.34,247.54 L642.71,246.63 L642.06,245.74 L641.40,244.86 L640.73,244.01 L640.05,243.18 L639.35,242.37 L638.65,241.60 L637.94,240.85 L637.22,240.13 L636.50,239.45 L635.76,238.81 L635.02,238.20 L634.28,237.63 L633.53,237.08 L632.77,236.56 L632.01,236.07 L631.24,235.59 L630.47,235.13 L629.68,234.69 L628.89,234.25 L628.09,233.82 L627.27,233.39 L626.43,232.97 L625.58,232.57 L624.71,232.17 L623.84,231.79 L622.95,231.42 L622.05,231.07 L621.14,230.74 L620.22,230.42 L619.29,230.11 L618.35,229.83 L617.39,229.57 L616.43,229.32 L615.46,229.08 L614.46,228.85 L613.45,228.63 L612.43,228.44 L611.39,228.26 L610.35,228.10 L609.30,227.96 L608.25,227.85 L607.20,227.77 L606.15,227.72 L605.10,227.70 L604.05,227.72 L602.99,227.77 L601.93,227.85 L600.87,227.96 L599.81,228.10 L598.76,228.26 L597.72,228.44 L596.70,228.64 L595.70,228.85 L594.73,229.08 L593.78,229.32 L592.88,229.57 L592.00,229.83 L591.15,230.11 L590.32,230.39 L589.52,230.70 L588.73,231.02 L587.95,231.36 L587.19,231.73 L586.46,232.17 L585.76,232.66 L585.08,233.17 L584.40,233.72 L583.72,234.30 L583.03,234.95 L582.32,235.69 L581.63,236.48 L580.95,237.30 L580.28,238.15 L579.64,238.99 L579.04,239.81 L578.47,240.59 L577.95,241.31 L577.49,241.94 L577.10,242.48 L576.78,242.89Z" fill="#e65e2b"/>
<path d="M585.30,248.80 C586.37,249.37 589.42,251.30 591.70,252.20 C593.98,253.10 596.55,253.80 599.00,254.20 C601.45,254.60 603.90,254.63 606.40,254.60 C608.90,254.57 611.57,254.33 614.00,254.00 C616.43,253.67 618.27,253.32 621.00,252.60 C623.73,251.88 628.83,250.18 630.40,249.70 C629.92,250.28 628.37,252.35 627.50,253.20 C626.63,254.05 625.58,254.53 625.20,254.80 C624.98,255.73 624.12,259.47 623.90,260.40 C623.52,259.67 621.98,256.73 621.60,256.00 C621.23,256.12 619.77,256.58 619.40,256.70 C619.08,257.78 617.82,262.12 617.50,263.20 C617.15,262.23 615.75,258.37 615.40,257.40 C614.73,257.47 612.07,257.73 611.40,257.80 C611.05,258.60 609.65,261.80 609.30,262.60 C608.95,261.82 607.55,258.68 607.20,257.90 C606.65,257.87 604.45,257.73 603.90,257.70 C603.53,258.65 602.07,262.45 601.70,263.40 C601.33,262.38 599.87,258.32 599.50,257.30 C598.80,257.12 596.00,256.38 595.30,256.20 C594.90,257.13 593.30,260.87 592.90,261.80 C592.62,260.70 591.48,256.30 591.20,255.20 C590.67,254.67 588.98,253.07 588.00,252.00 C587.02,250.93 585.75,249.33 585.30,248.80Z" fill="#e65e2b"/>
<path d="M549.40,315.50 C549.83,315.00 550.90,313.38 552.00,312.50 C553.10,311.62 554.72,310.78 556.00,310.20 C557.28,309.62 558.62,309.10 559.70,309.00 C560.78,308.90 561.77,309.33 562.50,309.60 C563.23,309.87 563.83,310.43 564.10,310.60 C564.42,310.40 565.10,309.68 566.00,309.40 C566.90,309.12 568.25,308.83 569.50,308.90 C570.75,308.97 572.17,309.28 573.50,309.80 C574.83,310.32 576.17,311.00 577.50,312.00 C578.83,313.00 580.83,315.17 581.50,315.80 C580.92,316.42 579.58,318.30 578.00,319.50 C576.42,320.70 574.13,322.17 572.00,323.00 C569.87,323.83 567.53,324.50 565.20,324.50 C562.87,324.50 560.12,323.82 558.00,323.00 C555.88,322.18 553.93,320.85 552.50,319.60 C551.07,318.35 549.92,316.18 549.40,315.50Z" fill="#e65e2b"/>
<path d="M551,316.6 L580,316.6" stroke="#fbd7c4" stroke-width="1.1"/>
</g>
<use href="#logo" transform="translate(-234.0,49.3) scale(0.846)"/>
</svg>
<svg class="a" style="left:0;top:0" width="1024" height="551">
<rect x="109.6" y="114.6" width="324.4" height="350.8" fill="none" stroke="#6a7898" stroke-opacity="0.42" stroke-width="1"/><rect x="108.4" y="113.4" width="3.2" height="3.2" fill="#c4c8ee" stroke="#8e96d0" stroke-width="0.6"/><rect x="270.4" y="113.4" width="3.2" height="3.2" fill="#c4c8ee" stroke="#8e96d0" stroke-width="0.6"/><rect x="432.4" y="113.4" width="3.2" height="3.2" fill="#c4c8ee" stroke="#8e96d0" stroke-width="0.6"/><rect x="108.4" y="288.4" width="3.2" height="3.2" fill="#c4c8ee" stroke="#8e96d0" stroke-width="0.6"/><rect x="432.4" y="288.4" width="3.2" height="3.2" fill="#c4c8ee" stroke="#8e96d0" stroke-width="0.6"/><rect x="108.4" y="463.79999999999995" width="3.2" height="3.2" fill="#c4c8ee" stroke="#8e96d0" stroke-width="0.6"/><rect x="270.4" y="463.79999999999995" width="3.2" height="3.2" fill="#c4c8ee" stroke="#8e96d0" stroke-width="0.6"/><rect x="432.4" y="463.79999999999995" width="3.2" height="3.2" fill="#c4c8ee" stroke="#8e96d0" stroke-width="0.6"/></svg>
<svg class="a" style="left:0;top:0" width="40" height="330"><path d="M8.6,54.4 L15.2,58.6 L11.8,59.2 L10.2,61.4Z" fill="none" stroke="#cdcdcd" stroke-width="0.9" stroke-linejoin="round"/><path d="M24.2,54.2 L30.9,58.6 L27.6,59.2 L26,61.6Z" fill="#cdcdcd"/><path d="M32.4,63 L34.199999999999996,63 L34.199999999999996,61.2Z" fill="#b8b8b8"/><path d="M7.2,74.2 L12.8,68.6" stroke="#cdcdcd" stroke-width="1.3"/><path d="M12.6,66.4 L12.6,67.4 M14.6,68.6 L15.6,68.6 M13.8,67.2 L14.8,66.2 M10.8,67.6 L11.6,68.2" stroke="#cdcdcd" stroke-width="0.8"/><path d="M24.6,72.6 Q22.4,69.6 24.8,67.6 Q27.6,65.6 30.6,67.6 Q31.6,68.8 30.8,70.4" fill="none" stroke="#cdcdcd" stroke-width="0.9"/><path d="M26.6,70.4 L31.6,72.8 L29.4,73.4 L28.4,75.2Z" fill="#cdcdcd"/><path d="M24.6,72.6 Q25.4,74.4 24.4,75.4" stroke="#cdcdcd" stroke-width="0.8" fill="none"/><path d="M7.2,87.4 L9,82.6 L12.2,79.4 L15.2,82.4 L12,85.6Z" fill="#cdcdcd"/><path d="M7.2,87.4 L10.4,84.2" stroke="#535353" stroke-width="0.6"/><path d="M17,89.2 L18.8,89.2 L18.8,87.4Z" fill="#b8b8b8"/><path d="M24.2,86.6 L26,82 L29,79 L31.8,81.8 L28.8,84.8Z" fill="#cdcdcd"/><path d="M24.6,86.4 Q22.2,83 24.2,80.4" stroke="#cdcdcd" stroke-width="0.8" fill="none"/><path d="M7.4,92.2 L14.8,92.2 L14.8,93.8 M7.4,92.2 L7.4,93.8 M11.1,92.2 L11.1,99.2 M9.6,99.2 L12.6,99.2" stroke="#cdcdcd" stroke-width="1.3" fill="none"/><path d="M17,100.8 L18.8,100.8 L18.8,99.0Z" fill="#b8b8b8"/><path d="M23,99.8 L31.4,92.2" stroke="#cdcdcd" stroke-width="0.9"/><path d="M33,100.8 L34.8,100.8 L34.8,99.0Z" fill="#b8b8b8"/><rect x="7" y="105" width="8.6" height="7.6" fill="#6a6a6a" stroke="#cdcdcd" stroke-width="0.9"/><path d="M17,113.8 L18.8,113.8 L18.8,112.0Z" fill="#b8b8b8"/><path d="M23.2,112.6 Q23.4,110.6 25,110 L31.6,104.6 L26.2,111.4 Q25,112.8 23.2,112.6Z" fill="#cdcdcd"/><path d="M33,113.8 L34.8,113.8 L34.8,112.0Z" fill="#b8b8b8"/><circle cx="9.4" cy="121.6" r="3.1" fill="none" stroke="#cdcdcd" stroke-width="0.9"/><path d="M8.6,124.4 L16.6,118.6" stroke="#cdcdcd" stroke-width="0.9"/><path d="M17,127 L18.8,127 L18.8,125.2Z" fill="#b8b8b8"/><path d="M23.4,122.6 L28.2,117.8 L32,121.6 L27.2,126.4Z" fill="none" stroke="#cdcdcd" stroke-width="0.9"/><path d="M25.8,120.2 L28.2,117.8 L32,121.6 L29.6,124Z" fill="#cdcdcd"/><path d="M33,127 L34.8,127 L34.8,125.2Z" fill="#b8b8b8"/><path d="M8.6,131.8 A3.8,3.8 0 1 0 12,130.4" fill="none" stroke="#cdcdcd" stroke-width="0.9"/><path d="M7,130.6 L9.6,130.6 L8.8,133.2Z" fill="#cdcdcd"/><path d="M17,139.4 L18.8,139.4 L18.8,137.6Z" fill="#b8b8b8"/><rect x="22.4" y="133.4" width="5.6" height="5.2" fill="none" stroke="#cdcdcd" stroke-width="0.9"/><rect x="25.4" y="130.6" width="6.4" height="5.6" fill="none" stroke="#cdcdcd" stroke-width="0.9"/><path d="M33,139.4 L34.8,139.4 L34.8,137.6Z" fill="#b8b8b8"/><path d="M6.6,150.6 L9.2,146.4 L8,144 L10.6,145.4 L13,147.2 L16.4,145.6 L14.4,149.4 L11,150 Z" fill="#cdcdcd"/><path d="M17,152.4 L18.8,152.4 L18.8,150.6Z" fill="#b8b8b8"/><rect x="24.4" y="143.6" width="8.4" height="7.4" fill="none" stroke="#cdcdcd" stroke-width="0.8" stroke-dasharray="1.4,0.9"/><path d="M22.4,143.2 L28.6,147 L25.6,147.6 L24.2,150Z" fill="#cdcdcd"/><path d="M33,152.4 L34.8,152.4 L34.8,150.6Z" fill="#b8b8b8"/><path d="M7.8,161.6 Q5.6,159 7.4,157.4 Q9.4,155.8 11,157.2 Q13.6,156 14.4,158.6 Q15,160.6 13,162.2 Q10.4,163.6 7.8,161.6Z" fill="none" stroke="#cdcdcd" stroke-width="0.8"/><path d="M12.2,159.6 L16.6,162.6 L14.6,163 L13.6,164.8Z" fill="#cdcdcd"/><defs><linearGradient id="pg" x1="0" x2="1"><stop offset="0" stop-color="#5a5a5a"/><stop offset="1" stop-color="#cfcfcf"/></linearGradient></defs><path d="M22.6,156 L25.6,156 L33.6,164.4 L22.6,164.4Z" fill="url(#pg)"/><path d="M22.6,156 L25.6,156 L25.6,164.4 M22.6,159.6 L27.4,159.6 M22.6,156 L22.6,164.4" stroke="#cdcdcd" stroke-width="0.8" fill="none"/><rect x="7" y="169" width="8.2" height="7.6" fill="#777" stroke="#cdcdcd" stroke-width="0.8"/><path d="M9.6,169 Q10.6,173 9.6,176.6 M12.4,169 Q11.6,173 12.6,176.6 M7,171.6 Q11,172.6 15.2,171.4 M7,174.2 Q11,173.4 15.2,174.4" stroke="#cdcdcd" stroke-width="0.6" fill="none"/><defs><linearGradient id="tg" x1="0" x2="1"><stop offset="0" stop-color="#262626"/><stop offset="1" stop-color="#f4f4f4"/></linearGradient></defs><rect x="23" y="169" width="8" height="7.6" fill="url(#tg)" stroke="#cdcdcd" stroke-width="0.6"/><path d="M6.6,190 L7,188.4 L12.4,183 L14,184.6 L8.6,190Z" fill="none" stroke="#cdcdcd" stroke-width="0.8"/><path d="M12,182.6 L14,180.8 L16,182.8 L14.2,184.8Z" fill="#cdcdcd"/><path d="M16.6,191.4 L18.400000000000002,191.4 L18.400000000000002,189.6Z" fill="#b8b8b8"/><rect x="22.6" y="182.4" width="5" height="3.4" rx="1" fill="#cdcdcd" transform="rotate(20 25 184)"/><rect x="26.6" y="185" width="5" height="3.6" rx="1" fill="none" stroke="#cdcdcd" stroke-width="0.8" transform="rotate(20 29 187)"/><path d="M10.8,195.6 L14.6,195.6 L15.4,197 L15.4,202.4 L10,202.4 L10,197Z" fill="none" stroke="#cdcdcd" stroke-width="0.8"/><rect x="11.6" y="193.8" width="2.2" height="1.6" fill="#cdcdcd"/><circle cx="12.7" cy="199.2" r="1.3" fill="#cdcdcd"/><path d="M6.8,194.6 L8,194.6 M7,196.6 L8.2,196.6" stroke="#cdcdcd" stroke-width="0.8"/><path d="M17,203.6 L18.8,203.6 L18.8,201.79999999999998Z" fill="#b8b8b8"/><path d="M22.4,194 L22.4,202.6 L32.2,202.6" stroke="#cdcdcd" stroke-width="0.7" fill="none"/><rect x="23.6" y="198.4" width="1.4" height="4" fill="#cdcdcd"/><rect x="26" y="195.4" width="1.4" height="7" fill="#cdcdcd"/><rect x="28.4" y="197.2" width="1.4" height="5.2" fill="#cdcdcd"/><rect x="30.6" y="196" width="1.4" height="6.4" fill="#cdcdcd"/><path d="M33,204 L34.8,204 L34.8,202.2Z" fill="#b8b8b8"/><path d="M9,207 L9,214.8 L15.4,214.8 L15.4,208.6 L7,208.6" stroke="#cdcdcd" stroke-width="0.8" fill="none"/><rect x="9.6" y="209.4" width="5.2" height="4.8" fill="#787878"/><path d="M22.4,215.4 L23,213.4 L29.6,206.6 L31.6,208.6 L25,215Z" fill="#cdcdcd"/><path d="M23.6,213.8 L28.8,208.6" stroke="#535353" stroke-width="0.5"/><path d="M33,217.4 L34.8,217.4 L34.8,215.6Z" fill="#b8b8b8"/><path d="M8.4,227.6 L7,223.8 Q6.8,222.6 7.8,223 L9,224.6 L9,220.6 Q9.6,219.6 10.2,220.6 L10.4,223.4 L10.8,219.8 Q11.6,219.2 12,220.2 L12.2,223.4 L12.8,220.6 Q13.6,220.2 13.8,221.2 L13.8,224 L14.6,222.8 Q15.6,222.6 15.2,223.8 L13.6,227.8Z" fill="#cdcdcd"/><path d="M16.6,229.6 L18.400000000000002,229.6 L18.400000000000002,227.79999999999998Z" fill="#b8b8b8"/><circle cx="25.8" cy="223.2" r="2.8" fill="none" stroke="#cdcdcd" stroke-width="0.9"/><path d="M27.8,225.4 L30.4,228.2" stroke="#cdcdcd" stroke-width="1.2"/><rect x="12.8" y="243.6" width="19.6" height="19" fill="#ffffff"/><rect x="16.4" y="247.2" width="10.8" height="10" fill="#474747"/><path d="M13.4,262 L32,244.2" stroke="#d8312c" stroke-width="1.3"/><rect x="3.7" y="234.6" width="19" height="14.4" fill="#4a4a4a" stroke="#3a3a3a" stroke-width="0.8"/><text x="12.6" y="247.2" font-family="Liberation Sans" font-size="8.4" font-weight="400" fill="#c8c8c8" text-anchor="middle">?</text><path d="M28.6,236.6 Q31.4,236.6 31.4,239.6" stroke="#6a6a6a" stroke-width="0.8" fill="none"/><circle cx="6.6" cy="257.6" r="2.2" fill="#e8e8e8" stroke="#3a3a3a" stroke-width="0.5"/><path d="M6.6,257.6 L6.6,255.4 A2.2,2.2 0 0 1 8.8,257.6Z" fill="#222"/><rect x="3.6" y="267.6" width="7.2" height="7.4" fill="#2a4c93" stroke="#1e1e1e" stroke-width="0.6"/><defs><linearGradient id="g2" x1="0" x2="1"><stop offset="0" stop-color="#fafafa"/><stop offset="1" stop-color="#444"/></linearGradient></defs><rect x="14.8" y="267.6" width="7.4" height="7.4" fill="url(#g2)"/><rect x="25.6" y="267.6" width="7.4" height="7.4" fill="#fafafa" stroke="#222" stroke-width="0.6"/><path d="M26,274.6 L32.6,268" stroke="#d8312c" stroke-width="1.2"/><rect x="4.2" y="279.8" width="8" height="8" fill="#3a3a3a"/><circle cx="7.4" cy="283" r="2.1" fill="none" stroke="#cfcfcf" stroke-width="0.8"/><circle cx="9.2" cy="284.8" r="2.1" fill="#cfcfcf"/><circle cx="17.2" cy="283" r="2.1" fill="none" stroke="#aaa" stroke-width="0.8"/><circle cx="19" cy="284.8" r="2.1" fill="none" stroke="#aaa" stroke-width="0.8"/><circle cx="29" cy="284.4" r="1.8" fill="none" stroke="#5e5e5e" stroke-width="0.8"/><rect x="13.4" y="296" width="6.6" height="4.6" fill="none" stroke="#c8c8c8" stroke-width="0.8"/><rect x="17.4" y="293.8" width="7.4" height="5.2" fill="#535353" stroke="#c8c8c8" stroke-width="0.8"/><circle cx="16.6" cy="314.4" r="0.8" fill="#c8c8c8"/><circle cx="19.4" cy="314.4" r="0.8" fill="#c8c8c8"/><circle cx="22.2" cy="314.4" r="0.8" fill="#c8c8c8"/></svg>
<div class="t" style="left:47.5px;top:3.76px;font-size:7.4px;line-height:7.4px;font-weight:400;color:#e8e8e8;transform:scaleX(0.830);text-shadow:0.3px 0 0 #e8e8e8">File</div>
<div class="t" style="left:64.6px;top:3.76px;font-size:7.4px;line-height:7.4px;font-weight:400;color:#e8e8e8;transform:scaleX(0.886);text-shadow:0.3px 0 0 #e8e8e8">Edit</div>
<div class="t" style="left:83.7px;top:3.76px;font-size:7.4px;line-height:7.4px;font-weight:400;color:#e8e8e8;transform:scaleX(0.894);text-shadow:0.3px 0 0 #e8e8e8">Object</div>
<div class="t" style="left:110.5px;top:3.76px;font-size:7.4px;line-height:7.4px;font-weight:400;color:#e8e8e8;transform:scaleX(0.861);text-shadow:0.3px 0 0 #e8e8e8">Type</div>
<div class="t" style="left:131.5px;top:3.76px;font-size:7.4px;line-height:7.4px;font-weight:400;color:#e8e8e8;transform:scaleX(0.866);text-shadow:0.3px 0 0 #e8e8e8">Select</div>
<div class="t" style="left:156.1px;top:3.76px;font-size:7.4px;line-height:7.4px;font-weight:400;color:#e8e8e8;transform:scaleX(0.906);text-shadow:0.3px 0 0 #e8e8e8">Effect</div>
<div class="t" style="left:180.1px;top:3.76px;font-size:7.4px;line-height:7.4px;font-weight:400;color:#e8e8e8;transform:scaleX(0.856);text-shadow:0.3px 0 0 #e8e8e8">View</div>
<div class="t" style="left:201.3px;top:3.76px;font-size:7.4px;line-height:7.4px;font-weight:400;color:#e8e8e8;transform:scaleX(0.878);text-shadow:0.3px 0 0 #e8e8e8">Window</div>
<div class="t" style="left:232.0px;top:3.76px;font-size:7.4px;line-height:7.4px;font-weight:400;color:#e8e8e8;transform:scaleX(0.895);text-shadow:0.3px 0 0 #e8e8e8">Help</div>
<div class="t" style="left:896.6px;top:4.42px;font-size:7.2px;line-height:7.2px;font-weight:400;color:#8a8a8a;transform:scaleX(0.786);">Search Adobe Help</div>
<div class="t" style="left:9.1px;top:22.52px;font-size:6.6px;line-height:6.6px;font-weight:700;color:#e8e8e8;transform:scaleX(0.808);">Image</div>
<div class="t" style="left:50.5px;top:22.52px;font-size:6.6px;line-height:6.6px;font-weight:700;color:#ececec;transform:scaleX(0.761);">face logo.png</div>
<div class="t" style="left:88.0px;top:23.59px;font-size:5.8px;line-height:5.8px;font-weight:400;color:#b0b0b0;transform:scaleX(0.882);">Transparent CMYK</div>
<div class="t" style="left:135.7px;top:23.59px;font-size:5.8px;line-height:5.8px;font-weight:400;color:#b0b0b0;transform:scaleX(0.958);">PPI: 113</div>
<div class="t" style="left:171.6px;top:22.52px;font-size:6.6px;line-height:6.6px;font-weight:700;color:#f0f0f0;transform:scaleX(0.792);">Unembed</div>
<div class="t" style="left:208.5px;top:22.69px;font-size:6.4px;line-height:6.4px;font-weight:700;color:#6c6c6c;transform:scaleX(0.766);">Edit Original</div>
<div class="t" style="left:253.3px;top:22.52px;font-size:6.6px;line-height:6.6px;font-weight:700;color:#f0f0f0;transform:scaleX(0.800);">Image Trace</div>
<div class="t" style="left:307.8px;top:22.52px;font-size:6.6px;line-height:6.6px;font-weight:700;color:#f0f0f0;transform:scaleX(0.758);">Mask</div>
<div class="t" style="left:339.1px;top:22.52px;font-size:6.6px;line-height:6.6px;font-weight:700;color:#f0f0f0;transform:scaleX(0.775);">Crop Image</div>
<div class="t" style="left:381.3px;top:22.52px;font-size:6.6px;line-height:6.6px;font-weight:700;color:#e6e6e6;transform:scaleX(0.754);">Opacity:</div>
<div class="t" style="left:406.5px;top:22.69px;font-size:6.4px;line-height:6.4px;font-weight:700;color:#f0f0f0;transform:scaleX(0.825);">100%</div>
<div class="t" style="left:577.4px;top:22.85px;font-size:6.2px;line-height:6.2px;font-weight:700;color:#e0e0e0;transform:scaleX(0.954);">X:</div>
<div class="t" style="left:597.2px;top:22.69px;font-size:6.4px;line-height:6.4px;font-weight:700;color:#f0f0f0;transform:scaleX(0.815);">-232.5028 p</div>
<div class="t" style="left:630.1px;top:22.85px;font-size:6.2px;line-height:6.2px;font-weight:700;color:#e0e0e0;transform:scaleX(0.959);">Y:</div>
<div class="t" style="left:649.5px;top:22.69px;font-size:6.4px;line-height:6.4px;font-weight:700;color:#f0f0f0;transform:scaleX(0.800);">251.9681 px</div>
<div class="t" style="left:682.6px;top:22.85px;font-size:6.2px;line-height:6.2px;font-weight:700;color:#e0e0e0;transform:scaleX(0.859);">W:</div>
<div class="t" style="left:703.7px;top:22.69px;font-size:6.4px;line-height:6.4px;font-weight:700;color:#f0f0f0;transform:scaleX(0.800);">465.0056 px</div>
<div class="t" style="left:752.5px;top:22.52px;font-size:6.6px;line-height:6.6px;font-weight:700;color:#e0e0e0;transform:scaleX(0.904);">H:</div>
<div class="t" style="left:772.5px;top:22.69px;font-size:6.4px;line-height:6.4px;font-weight:700;color:#f0f0f0;transform:scaleX(0.822);">503.383 px</div>
<div class="t" style="left:44.0px;top:38.22px;font-size:7.2px;line-height:7.2px;font-weight:700;color:#efefef;transform:scaleX(0.831);">after.ai* @ 100 % (CMYK/Preview)</div>
<div class="t" style="left:160.6px;top:38.22px;font-size:7.2px;line-height:7.2px;font-weight:700;color:#9c9c9c;transform:scaleX(0.818);">face logo.png @ 76.6 % (RGB/Preview)</div>
<div class="t" style="left:894.7px;top:44.86px;font-size:6.8px;line-height:6.8px;font-weight:700;color:#a8a8a8;transform:scaleX(0.776);">Properties</div>
<div class="t" style="left:930.7px;top:44.86px;font-size:6.8px;line-height:6.8px;font-weight:700;color:#f2f2f2;transform:scaleX(0.739);">Layers</div>
<div class="t" style="left:956.1px;top:44.86px;font-size:6.8px;line-height:6.8px;font-weight:700;color:#a8a8a8;transform:scaleX(0.731);">Libraries</div>
<div class="t" style="left:944.0px;top:61.56px;font-size:6.8px;line-height:6.8px;font-weight:400;color:#e2e8f0;transform:scaleX(0.776);">Layer 1</div>
<div class="t" style="left:956.5px;top:73.26px;font-size:6.8px;line-height:6.8px;font-weight:400;color:#d8d8d8;transform:scaleX(0.868);">&lt;Image&gt;</div>
<div class="t" style="left:956.5px;top:83.76px;font-size:6.8px;line-height:6.8px;font-weight:400;color:#d8d8d8;transform:scaleX(0.810);">&lt;Linked F...</div>
<div class="t" style="left:956.5px;top:95.16px;font-size:6.8px;line-height:6.8px;font-weight:400;color:#d8d8d8;transform:scaleX(0.816);">&lt;Group&gt;</div>
<div class="t" style="left:893.0px;top:542.69px;font-size:6.4px;line-height:6.4px;font-weight:700;color:#dcdcdc;transform:scaleX(0.786);">1 Layer</div>
<div class="t" style="left:43.6px;top:543.82px;font-size:6px;line-height:6px;font-weight:400;color:#e0e0e0;transform:scaleX(0.898);">100%</div>
<div class="t" style="left:81.7px;top:543.82px;font-size:6px;line-height:6px;font-weight:400;color:#e0e0e0;transform:scaleX(1.200);">0°</div>
<div class="t" style="left:142.0px;top:543.82px;font-size:6px;line-height:6px;font-weight:400;color:#e0e0e0;transform:scaleX(0.987);">1</div>
<div class="t" style="left:227.0px;top:543.52px;font-size:6px;line-height:6px;font-weight:400;color:#d6d6d6;transform:scaleX(0.865);">Toggle Selection</div>
</div></body></html>
